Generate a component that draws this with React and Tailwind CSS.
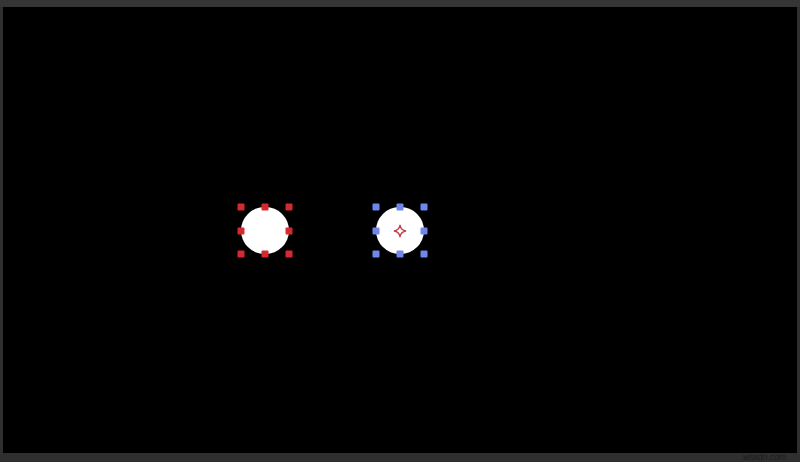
import React from 'react';

// Selection handles around a shape on the canvas
const Handles = ({ color }) => {
    const spots = [
        [0, 0], [50, 0], [100, 0],
        [0, 50], [100, 50],
        [0, 100], [50, 100], [100, 100],
    ];
    return spots.map(([x, y], i) => (
        <div
            key={i}
            className={`absolute w-[7px] h-[7px] rounded-[1px] -translate-x-1/2 -translate-y-1/2 ${color}`}
            style={{ left: `${x}%`, top: `${y}%` }}
        />
    ));
};

const Shape = ({ left, handleColor, children }) => (
    <div className="absolute w-[48px] h-[47px]" style={{ left, top: 200 }}>
        <div className="absolute inset-0 rounded-full bg-white flex items-center justify-center">
            {children}
        </div>
        <Handles color={handleColor} />
    </div>
);

const App = () => {
    return (
        <div className="w-[800px] h-[462px] bg-[#2f2f2f] flex flex-col overflow-hidden" style={{ fontFamily: '"Liberation Sans", sans-serif' }}>
            <div className="h-[7px] bg-[#353535]" />
            <div className="flex-1 mx-[3px] bg-black relative">
                <Shape left={238} handleColor="bg-[#d42a2f]" />
                <Shape left={373} handleColor="bg-[#6f86ea]">
                    <svg width="14" height="14" viewBox="0 0 12 12">
                        <path
                            d="M6 0.8 Q6.6 5.4 11.2 6 Q6.6 6.6 6 11.2 Q5.4 6.6 0.8 6 Q5.4 5.4 6 0.8 Z"
                            fill="none"
                            stroke="#c0404a"
                            strokeWidth="1.1"
                        />
                    </svg>
                </Shape>
            </div>
            <div className="h-[9px] flex items-center justify-end pr-[14px]">
                <span className="text-[9px] leading-none text-[#1c1c1c] tracking-tight">wsxdn.com</span>
            </div>
        </div>
    );
};

export default App;
